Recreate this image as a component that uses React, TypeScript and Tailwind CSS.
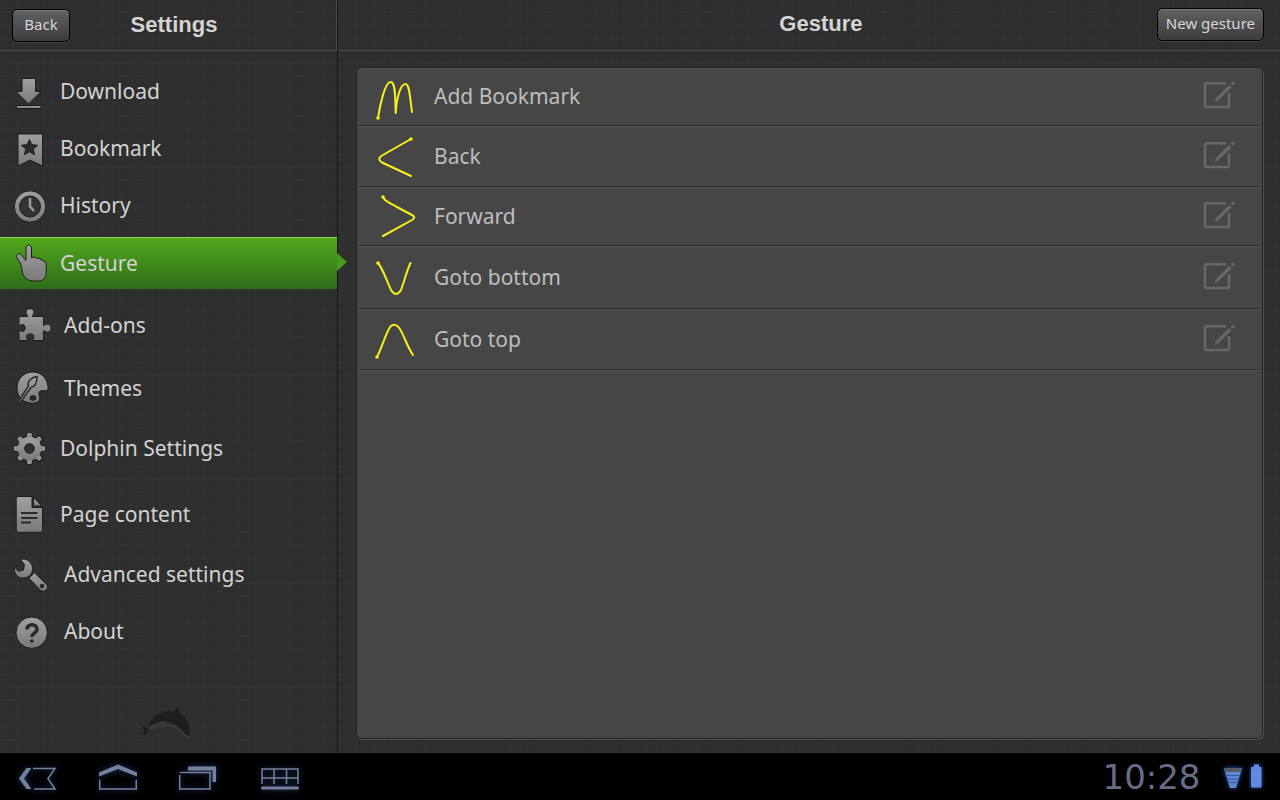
import type { ReactNode } from "react";
import { clsx } from "clsx";

const LINEN =
  "bg-[#2f2f2f] bg-[repeating-linear-gradient(0deg,rgba(255,255,255,0.016)_0px_1px,transparent_1px_5px,rgba(0,0,0,0.03)_5px_6px,transparent_6px_13px),repeating-linear-gradient(90deg,rgba(255,255,255,0.016)_0px_1px,transparent_1px_7px,rgba(0,0,0,0.03)_7px_8px,transparent_8px_17px),repeating-linear-gradient(90deg,transparent_0px_11px,rgba(0,0,0,0.04)_11px_12px,transparent_12px_29px),repeating-linear-gradient(0deg,transparent_0px_3px,rgba(0,0,0,0.03)_3px_4px)]";

type NavItem = {
  label: string;
  row: string;
  indent?: boolean;
  active?: boolean;
  icon: ReactNode;
};

const DARK = "#2a2a2a";

const GEAR_TEETH = [0, 45, 90, 135, 180, 225, 270, 315];

const NAV: NavItem[] = [
  {
    label: "Download",
    row: "h-[57px]",
    icon: (
      <>
        <path d="M10 6.5h13.5v13h5.5L16.5 32 4 19.5h6z" />
        <path d="M4.5 33.5H29v3H4.5z" />
      </>
    ),
  },
  {
    label: "Bookmark",
    row: "h-[57px]",
    icon: (
      <>
        <path d="M6 5h24.5v32L18 31 6 37z" />
        <path
          fill={DARK}
          d="M17.500 10.500l2.300 5.200 5.700.6-4.200 3.800 1.200 5.600-5-2.900-5 2.900 1.200-5.600-4.200-3.800 5.700-.6z"
        />
      </>
    ),
  },
  {
    label: "History",
    row: "h-[57px] mb-[3px]",
    icon: (
      <>
        <circle cx="18" cy="20.5" r="15.7" />
        <circle cx="18" cy="20.5" r="10.5" fill="#333" />
        <path
          d="M18 12v8.5l4 4.5"
          fill="none"
          stroke="#9a9a9a"
          strokeWidth="2.5"
        />
      </>
    ),
  },
  {
    label: "Gesture",
    row: "h-[52px]",
    active: true,
    icon: (
      <path d="M14 4c0-4 5.500-4 5.500 0v10c2-1.500 4-1 5 .7 2-1.200 3.800-.6 4.500 1.300 1.500-.5 2.400.3 2.700 1.500 1.800-.2 2.500 1 2.500 2.500V28.500c0 6-3 8.500-9 8.500h-4c-6 0-10-4-11-10C9.500 21.500 8.500 18.500 5.300 14.500c-1.600-2.700-.3-4.700 2-4.700 2 0 3 1.700 4 4l2.700 2.500z" />
    ),
  },
  {
    label: "Add-ons",
    row: "h-[72px]",
    indent: true,
    icon: (
      <path d="M7 11.500h8.500c.8-1-1.500-2-1.500-4.300C14 2.500 22 2.500 22 7.200c0 2.300-2.300 3.300-1.500 4.300h11v8.800c1 .8 2-1.300 4-1.300 4.700 0 4.700 8.300 0 8.300-2 0-3-2.100-4-1.300v9.500H21c-1-1 1-2 1-4 0-3.500-7.500-3.500-7.500 0 0 2 2 3 1 4H7v-9.700c1-1 2 .7 3.500.7 3.500 0 3.500-7 0-7-1.500 0-2.500 1.700-3.500.7z" />
    ),
  },
  {
    label: "Themes",
    row: "h-[54px]",
    indent: true,
    icon: (
      <>
        <path d="M36 22c-2 2-8-1-9 2.500-.7 3 2 5 0 8-1.500 2.500-5 3-8 2.500C10 34.500 5 28 5 20 5 10.500 12 4 21 4s16 8 15 18z" />
        <ellipse cx="21" cy="30" rx="3" ry="2.3" fill={DARK} />
        <path
          d="M5 35.500L16.500 18c-1.500-4 2-8.500 8.500-9.500 0 5-1.500 10-6 11L7.500 35.500z"
          stroke={DARK}
          strokeWidth="1.5"
        />
      </>
    ),
  },
  {
    label: "Dolphin Settings",
    row: "h-[66px]",
    icon: (
      <>
        {GEAR_TEETH.map((deg) => (
          <path
            key={deg}
            d="M13.500 11l1.500-5.500q.3-1 1.200-1h2.600q.9 0 1.200 1L21.500 11z"
            transform={`rotate(${deg} 17.5 20.5)`}
          />
        ))}
        <circle cx="17.5" cy="20.5" r="11.6" stroke="none" />
        <circle cx="17.5" cy="20.5" r="4.8" fill="#2f2f2f" />
      </>
    ),
  },
  {
    label: "Page content",
    row: "h-[66px]",
    icon: (
      <>
        <path d="M6.500 2.500H20V13.500H30.500V36q0 2.300-2.300 2.300H6.500Q4.200 38.300 4.200 36V4.800q0-2.300 2.300-2.300z" />
        <path d="M21.500 3.500l8.500 8.500h-8.500z" />
        <path
          d="M9 19h16.500M9 24h16.500M9 28.500h10"
          stroke={DARK}
          strokeWidth="2"
        />
      </>
    ),
  },
  {
    label: "Advanced settings",
    row: "h-[54px]",
    indent: true,
    icon: (
      <>
        <path d="M8.500 5.500L12.500 10.500 11.500 16 6.500 17.200 2.600 13.300C1.500 20 6 24.500 12 24 17.500 23.500 21 19 20.500 13.500 20 8 14 3.500 8.500 5.500z" />
        <path d="M17 24.200L22.500 18.800 34.500 30.300q2.500 3 0 5.500t-5.500 1z" />
        <circle cx="30" cy="32" r="1.8" fill={DARK} />
      </>
    ),
  },
  {
    label: "About",
    row: "h-[60px]",
    indent: true,
    icon: (
      <>
        <circle cx="19.7" cy="21.7" r="15.7" />
        <path
          d="M15 18.500c0-6.500 10-6.500 10 0 0 3.500-5.200 3.500-5.200 7.500M19.800 28.500v3"
          fill="none"
          stroke={DARK}
          strokeWidth="3.5"
        />
      </>
    ),
  },
];

const GESTURES = [
  {
    label: "Add Bookmark",
    row: "h-[58px]",
    d: "M8 45C10 32 15 9 20.500 9S25 25 25.700 40C26 28 30 11 35.500 11C39.500 11 40 25 42 39",
    start: [8, 45],
  },
  {
    label: "Back",
    row: "h-[61px]",
    d: "M41 7L12 23.500Q6.500 27 12 30.500L41 44",
    start: [41, 7],
  },
  {
    label: "Forward",
    row: "h-[59px]",
    d: "M13 5C14 9 20 11 26 14.500L42 23Q46.500 25.500 42 28L13 44",
    start: [13, 5],
  },
  {
    label: "Goto bottom",
    row: "h-[63px]",
    d: "M8 10C13 16 16 26 21 37Q26 45 31 37C34 29 37 17 40.500 10",
    start: [8, 10],
  },
  {
    label: "Goto top",
    row: "h-[61px]",
    d: "M7 42C12 33 15 20 20 12Q24 7.500 28.500 12C34 19 37 32 43 40",
    start: [7, 42],
  },
];

function NavIcon({ children }: { children: ReactNode }) {
  return (
    <svg
      viewBox="0 0 40 40"
      className="size-10 shrink-0"
      fill="url(#metal)"
      stroke="#1c1c1c"
      strokeWidth="1"
      aria-hidden="true"
    >
      {children}
    </svg>
  );
}

function EditIcon() {
  return (
    <svg viewBox="0 0 32 28" className="h-7 w-8" fill="none" aria-hidden="true">
      <path
        d="M23 2.200H3.500Q2 2.200 2 3.700V24.500Q2 26 3.500 26H24.500Q26 26 26 24.500V12"
        stroke="#676767"
        strokeWidth="2.5"
      />
      <path d="M11.500 21l1.500-4L26 4l2.500 2.500L15 19.500z" fill="#676767" />
      <circle cx="30" cy="2.5" r="1.8" fill="#676767" />
    </svg>
  );
}

function HeaderButton({ children }: { children: ReactNode }) {
  return (
    <button
      type="button"
      className="h-[33px] min-w-[58px] shrink-0 rounded-[5px] border border-black bg-gradient-to-b from-[#626262] to-[#3c3c3c] px-2 pb-0.5 text-[15px] leading-5 text-[#d6d6d6] shadow-[inset_0_1px_0_#777,0_1px_0_#444]"
    >
      {children}
    </button>
  );
}

function SysButton({ label, children }: { label: string; children: ReactNode }) {
  return (
    <button type="button" aria-label={label} className="h-7 w-12">
      <svg
        viewBox="0 0 48 28"
        className="h-7 w-12 overflow-visible drop-shadow-[0_0_3px_#23386b]"
        fill="none"
        stroke="#74809c"
        strokeWidth="1.5"
        aria-hidden="true"
      >
        {children}
      </svg>
    </button>
  );
}

function Sidebar() {
  return (
    <aside className="flex w-[338px] shrink-0 flex-col border-r border-[#151515]">
      <header className="flex h-[51px] items-center border-r border-b border-[#4c4c4c] pr-[58px] pl-3">
        <HeaderButton>Back</HeaderButton>
        <h1 className="flex-1 text-center font-['Liberation_Sans',sans-serif] text-[22px] leading-6 font-bold text-[#d4d4d4]">
          Settings
        </h1>
      </header>
      <nav className="pt-3">
        <ul>
          {NAV.map((item) => (
            <li key={item.label} className={clsx("relative", item.row)}>
              <a
                href="#"
                aria-current={item.active ? "page" : undefined}
                className={clsx(
                  "flex h-full items-center pl-3 text-[21px] leading-7 text-[#d2d2d2]",
                  item.indent ? "gap-3" : "gap-2",
                  item.active &&
                    "border-t border-[#8fd05f] bg-gradient-to-b from-[#53a81c] to-[#2d6d18]"
                )}
              >
                <NavIcon>{item.icon}</NavIcon>
                <span className="pb-px">{item.label}</span>
              </a>
              {item.active && (
                <svg
                  viewBox="0 0 10 18"
                  className="absolute top-4 left-full h-[18px] w-[10px]"
                  aria-hidden="true"
                >
                  <path d="M0 0l10 9L0 18z" fill="#479a1d" />
                </svg>
              )}
            </li>
          ))}
        </ul>
      </nav>
      <svg
        viewBox="0 0 52 34"
        className="mt-auto mb-[14px] ml-[139px] h-[34px] w-[52px]"
        aria-hidden="true"
      >
        <path
          d="M9 22C13 10 24 4 36 6.500L37.500 1.500 42 9C49 14 52 22 50 31 45 29 42 22 34 19 25 15 16 17 9 22zM3 22c3-1 7 1 6 5-1 2-4 3-6 2 3-1 3-4 0-7z"
          fill="#1e1e1e"
        />
        <path
          d="M11 24C16 19 21 17 28 17M14 24C19 20 25 19 34 21 42 24 45 32 50 32"
          fill="none"
          stroke="#484848"
        />
      </svg>
    </aside>
  );
}

function GesturePane() {
  return (
    <main className="flex min-w-0 flex-1 flex-col">
      <header className="flex h-[51px] items-center border-b border-[#4c4c4c] pr-4 pb-0.5 pl-[147px]">
        <h2 className="flex-1 text-center font-['Liberation_Sans',sans-serif] text-[22px] leading-6 font-bold text-[#d4d4d4]">
          Gesture
        </h2>
        <HeaderButton>New gesture</HeaderButton>
      </header>
      <section className="mt-4 mr-[17px] mb-[14px] ml-[18px] flex-1 rounded-md border border-[#222] bg-[#464646] shadow-[inset_0_1px_0_#525252,1px_1px_0_#505050]">
        <ul className="px-0.5">
          {GESTURES.map((g) => (
            <li
              key={g.label}
              className={clsx(
                "flex items-center border-b border-[#2b2b2b] pr-[25px] pl-[11px] shadow-[0_1px_0_#525252]",
                g.row
              )}
            >
              <svg
                viewBox="0 0 48 48"
                className="size-12 shrink-0"
                fill="none"
                stroke="#f4f01a"
                strokeWidth="2"
                strokeLinecap="round"
                strokeLinejoin="round"
                aria-hidden="true"
              >
                <path d={g.d} />
                <circle cx={g.start[0]} cy={g.start[1]} r="0.8" />
              </svg>
              <span className="flex-1 pb-px pl-4 text-[21px] leading-7 text-[#bdbdbd]">
                {g.label}
              </span>
              <button
                type="button"
                aria-label={`Edit ${g.label}`}
                className="pb-[3px]"
              >
                <EditIcon />
              </button>
            </li>
          ))}
        </ul>
      </section>
    </main>
  );
}

function SystemBar() {
  return (
    <footer className="flex h-[47px] shrink-0 items-center bg-black pr-4 pl-[14px]">
      <div className="flex flex-1 gap-8">
        <SysButton label="Back">
          <path
            d="M12.500 5h5L10 15.500 17.500 26h-5L5 15.500z"
            fill="#74809c"
            stroke="none"
          />
          <path d="M19 5.500H41L34 15.500 41 26H20" />
        </SysButton>
        <SysButton label="Home">
          <path
            d="M5 13.500V9.500L24 1.500l19 8v4L24 6z"
            fill="#74809c"
            stroke="none"
          />
          <path d="M5.700 16.500V26H42.300V16.500" />
        </SysButton>
        <SysButton label="Recent apps">
          <path
            d="M14 3.500H42V19h-3.500V7.500H14z"
            fill="#74809c"
            stroke="none"
          />
          <path d="M5.700 12V26H36V9.500H5.700" />
        </SysButton>
        <SysButton label="Keyboard">
          <path d="M8 21V6H44V21M8 15H44M20 6V21M32.500 6V21" />
          <path d="M7.300 25H44.700" strokeWidth="3" />
        </SysButton>
      </div>
      <time className="w-[121px] text-center font-['DejaVu_Sans',sans-serif] text-[34px] leading-8 text-[#646d84]">
        10:28
      </time>
      <svg
        viewBox="0 0 44 28"
        className="ml-2 h-7 w-11 drop-shadow-[0_0_2px_#2c5fc0]"
        aria-hidden="true"
      >
        <path d="M4 5H22L16 25H10z" fill="#5f86cf" />
        <path d="M4 5H22L21 9H5z" fill="#555b68" />
        <path
          d="M5 12.500H20M7 16H19M8 19.500H18"
          stroke="#1d3a78"
          strokeWidth="0.6"
        />
        <path d="M31 4h3V1.500h5V4h2.500V24.500H31z" fill="#5f8ae0" />
      </svg>
    </footer>
  );
}

export default function App() {
  return (
    <div className="flex min-h-screen flex-col font-['Noto_Sans','Open_Sans',sans-serif]">
      <svg className="absolute size-0" aria-hidden="true">
        <defs>
          <linearGradient id="metal" x1="0" y1="0" x2="0" y2="1">
            <stop offset="0" stopColor="#a0a0a0" />
            <stop offset="1" stopColor="#7a7a7a" />
          </linearGradient>
        </defs>
      </svg>
      <div className={clsx("flex flex-1", LINEN)}>
        <Sidebar />
        <GesturePane />
      </div>
      <SystemBar />
    </div>
  );
}
